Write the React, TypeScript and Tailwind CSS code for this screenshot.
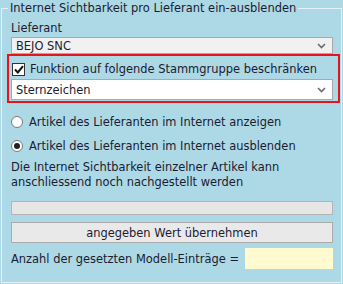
import React from 'react';

const Chevron = () => (
  <svg width="9" height="6" viewBox="0 0 9 6" className="shrink-0">
    <path d="M1 1 L4.5 4.5 L8 1" fill="none" stroke="#6b6b6b" strokeWidth="1.6" />
  </svg>
);

function SelectBox({ value, white }: { value: string; white?: boolean }) {
  return (
    <div
      className={
        'flex items-center justify-between border border-[#a9a9a9] pl-[4px] pr-[6px] ' +
        (white ? 'h-[21px] bg-white' : 'h-[17px] bg-[#f1f1f1]')
      }
    >
      <span>{value}</span>
      <Chevron />
    </div>
  );
}

function Radio({ checked, label }: { checked?: boolean; label: string }) {
  return (
    <div className="flex items-center h-[16px]">
      <span className="w-[12px] h-[12px] rounded-full border border-[#7a7a7a] bg-white flex items-center justify-center">
        {checked && <span className="w-[6px] h-[6px] rounded-full bg-[#222]" />}
      </span>
      <span className="ml-[6px]">{label}</span>
    </div>
  );
}

export default function App() {
  return (
    <div
      className="w-[343px] h-[284px] bg-[#add8e6] px-[1px] pb-[1px] text-[11.45px] leading-[14px] text-[#1c1c30]"
      style={{ fontFamily: '"DejaVu Sans", Verdana, sans-serif' }}
    >
      <fieldset className="h-[283px] border border-[#e4f1f4] pl-[9px] pr-[8px]">
        <legend className="-ml-[3px] px-[2px] leading-[16px]">Internet Sichtbarkeit pro Lieferant ein-ausblenden</legend>
        <div className="mt-[5px] leading-[14px]">Lieferant</div>
        <div className="mt-[2px]">
          <SelectBox value="BEJO SNC" />
        </div>
        <div className="-ml-[4px] -mr-[7px] border-2 border-[#e8141c] pl-[2px] pr-[5px] pt-[6px] pb-[1px]">
          <div className="flex items-center h-[14px]">
            <span className="ml-[1px] w-[13px] h-[13px] border border-[#333] bg-white flex items-center justify-center">
              <svg width="10" height="9" viewBox="0 0 10 9">
                <path d="M1 4.5 L3.8 7.5 L9 1.2" fill="none" stroke="#111" strokeWidth="2" />
              </svg>
            </span>
            <span className="ml-[5px]">Funktion auf folgende Stammgruppe beschränken</span>
          </div>
          <div className="mt-[3px]">
            <SelectBox value="Sternzeichen" white />
          </div>
        </div>
        <div className="mt-[11px] flex flex-col gap-[8px]">
          <Radio label="Artikel des Lieferanten im Internet anzeigen" />
          <Radio checked label="Artikel des Lieferanten im Internet ausblenden" />
        </div>
        <p className="mt-[6px] leading-[15px]">
          Die Internet Sichtbarkeit einzelner Artikel kann
          <br />
          anschliessend noch nachgestellt werden
        </p>
        <div className="mt-[11px] h-[14px] border border-[#b3b3b3] bg-[#e6e6e6]" />
        <button className="mt-[7px] w-full h-[21px] border border-[#acacac] bg-[#e9e9e9] text-center">
          angegeben Wert übernehmen
        </button>
        <div className="mt-[5px] flex items-center justify-between">
          <span>Anzahl der gesetzten Modell-Einträge =</span>
          <div className="w-[88px] h-[21px] bg-[#fffad0]" />
        </div>
      </fieldset>
    </div>
  );
}
